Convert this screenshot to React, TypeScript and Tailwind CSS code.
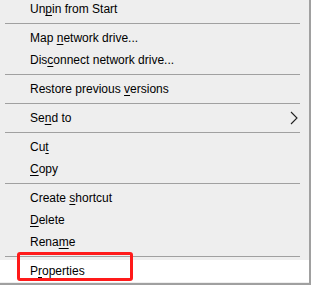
const Sep = () => (
  <div className="h-[7px] flex items-center pl-[5px] pr-[9px]">
    <div className="h-px w-full bg-[#a0a0a0]" />
  </div>
);

function Item({
  pre,
  key_,
  post,
  active,
  sub,
}: {
  pre: string;
  key_: string;
  post: string;
  active?: boolean;
  sub?: boolean;
}) {
  return (
    <div
      className={`h-[22px] flex items-center pl-[30px] pr-[11px] ${active ? "bg-white" : ""}`}
    >
      <span className="flex-1 whitespace-nowrap">
        {pre}
        <span className="underline underline-offset-2">{key_}</span>
        {post}
      </span>
      {sub && (
        <svg width="8" height="14" viewBox="0 0 8 14" className="text-[#202020]">
          <polyline points="1,1 7,7 1,13" fill="none" stroke="currentColor" strokeWidth="1.1" />
        </svg>
      )}
    </div>
  );
}

export default function App() {
  return (
    <div className="w-[311px] h-[287px] overflow-hidden bg-white">
      <div
        className="relative w-[311px] h-[287px] bg-[#eeeeee] border-r-2 border-b-2 border-[#a0a0a0] text-[12px] text-black"
        style={{ fontFamily: '"Segoe UI", "Liberation Sans", Arial, sans-serif' }}
      >
        <div className="-mt-[2px]">
          <Item pre="Un" key_="p" post="in from Start" />
          <Sep />
          <Item pre="Map " key_="n" post="etwork drive..." />
          <Item pre="Dis" key_="c" post="onnect network drive..." />
          <Sep />
          <Item pre="Restore previous " key_="v" post="ersions" />
          <Sep />
          <Item pre="Se" key_="n" post="d to" sub />
          <Sep />
          <Item pre="Cu" key_="t" post="" />
          <Item pre="" key_="C" post="opy" />
          <Sep />
          <Item pre="Create " key_="s" post="hortcut" />
          <Item pre="" key_="D" post="elete" />
          <Item pre="Rena" key_="m" post="e" />
          <Sep />
          <Item pre="P" key_="r" post="operties" active />
        </div>
        <div className="absolute left-[17px] top-[254px] w-[116px] h-[29px] border-[3px] border-[#ff1a1a] rounded-[3px]" />
      </div>
    </div>
  );
}
